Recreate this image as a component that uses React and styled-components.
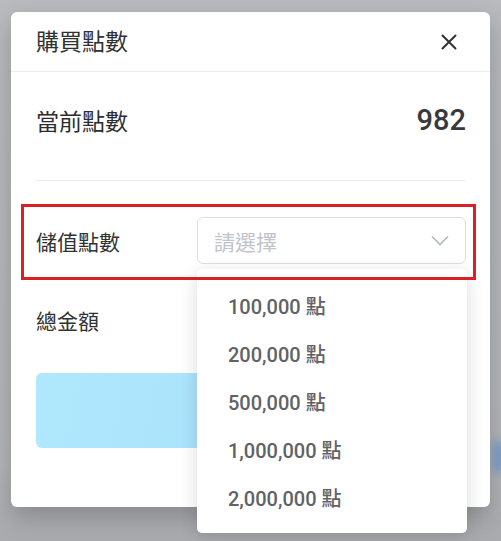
import React from "react";
import styled, { createGlobalStyle } from "styled-components";

const Global = createGlobalStyle`
  html, body { margin: 0; padding: 0; }
  body {
    background: linear-gradient(180deg, #b9babe 0%, #b4b5b9 85%, #a9aaae 100%);
    font-family: "Roboto", "Noto Sans CJK TC", sans-serif;
    width: 501px;
    height: 541px;
    overflow: hidden;
  }
`;

const Page = styled.div`
  position: relative;
  padding: 12px 0 0 11px;
  width: 501px;
  height: 541px;
  box-sizing: border-box;
`;

const BgBlob = styled.div`
  position: absolute;
  left: 492px;
  top: 440px;
  width: 14px;
  height: 34px;
  border-radius: 7px;
  background: #7f9dc6;
  filter: blur(4px);
`;

const Modal = styled.div`
  position: relative;
  width: 479px;
  height: 495px;
  background: #fff;
  border-radius: 6px;
  box-shadow: 0 10px 24px rgba(0, 0, 0, 0.22);
  display: flex;
  flex-direction: column;
`;

const Header = styled.div`
  height: 59px;
  padding: 0 24px 0 25px;
  display: flex;
  align-items: center;
  justify-content: space-between;
  border-bottom: 1px solid #ebeef5;
`;

const Title = styled.div`
  font-size: 23px;
  color: #303133;
  line-height: 1;
  padding-top: 2px;
`;

const CloseBtn = styled.button`
  border: 0;
  background: none;
  padding: 0;
  width: 18px;
  height: 18px;
  margin-right: 8px;
  display: flex;
  align-items: center;
  justify-content: center;
`;

const Body = styled.div`
  padding: 0 24px 0 25px;
  display: flex;
  flex-direction: column;
`;

const CurrentRow = styled.div`
  height: 96px;
  display: flex;
  align-items: center;
  justify-content: space-between;
`;

const CurrentLabel = styled.div`
  font-size: 23px;
  font-weight: 400;
  color: #2c2d30;
`;

const CurrentValue = styled.div`
  font-size: 29px;
  font-weight: 500;
  color: #38393c;
`;

const Divider = styled.div`
  margin-top: 12px;
  height: 1px;
  background: #ebeef5;
`;

const FormRow = styled.div`
  display: flex;
  align-items: center;
  height: ${(p) => p.$h}px;
  margin-top: ${(p) => p.$mt}px;
`;

const Label = styled.div`
  width: 161px;
  flex: none;
  font-size: 21px;
  color: #303133;
`;

const SelectWrap = styled.div`
  position: relative;
  flex: 1;
`;

const SelectBox = styled.div`
  height: 47px;
  box-sizing: border-box;
  border: 1px solid #dcdfe6;
  border-radius: 6px;
  display: flex;
  align-items: center;
  justify-content: space-between;
  padding: 0 16px 0 16px;
`;

const Placeholder = styled.span`
  font-size: 21px;
  color: #c0c4cc;
`;

const Dropdown = styled.ul`
  position: absolute;
  top: 52px;
  left: 0;
  width: 270px;
  margin: 0;
  padding: 12px 0;
  list-style: none;
  background: #fff;
  border-radius: 5px;
  box-shadow: 0 4px 18px rgba(0, 0, 0, 0.14);
  z-index: 2;
`;

const Option = styled.li`
  height: 48px;
  display: flex;
  align-items: center;
  padding-left: 31px;
  font-size: 20px;
  font-weight: 500;
  color: #606266;
`;

const Submit = styled.div`
  margin-top: 29px;
  height: 75px;
  border-radius: 6px;
  background: linear-gradient(100deg, #b0e8fd 0%, #a8e2fb 50%, #9fd6f6 100%);
`;

const Highlight = styled.div`
  position: absolute;
  left: 10px;
  top: 192px;
  width: 455px;
  height: 76px;
  box-sizing: border-box;
  border: 3px solid #dc1f22;
  z-index: 3;
  pointer-events: none;
`;

const options = ["100,000 點", "200,000 點", "500,000 點", "1,000,000 點", "2,000,000 點"];

export default function App() {
  return (
    <>
      <Global />
      <Page>
        <BgBlob />
        <Modal>
          <Header>
            <Title>購買點數</Title>
            <CloseBtn aria-label="close">
              <svg width="16" height="16" viewBox="0 0 16 16">
                <path d="M1.5 1.5 L14.5 14.5 M14.5 1.5 L1.5 14.5" stroke="#303133" strokeWidth="2" strokeLinecap="round" />
              </svg>
            </CloseBtn>
          </Header>
          <Body>
            <CurrentRow>
              <CurrentLabel>當前點數</CurrentLabel>
              <CurrentValue>982</CurrentValue>
            </CurrentRow>
            <Divider />
            <FormRow $h={47} $mt={36}>
              <Label>儲值點數</Label>
              <SelectWrap>
                <SelectBox>
                  <Placeholder>請選擇</Placeholder>
                  <svg width="18" height="11" viewBox="0 0 18 11">
                    <path d="M1 1.5 L9 9.5 L17 1.5" fill="none" stroke="#b4b7bd" strokeWidth="1.6" />
                  </svg>
                </SelectBox>
                <Dropdown>
                  {options.map((o) => (
                    <Option key={o}>{o}</Option>
                  ))}
                </Dropdown>
              </SelectWrap>
            </FormRow>
            <FormRow $h={48} $mt={32}>
              <Label>總金額</Label>
            </FormRow>
            <Submit />
          </Body>
          <Highlight />
        </Modal>
      </Page>
    </>
  );
}
